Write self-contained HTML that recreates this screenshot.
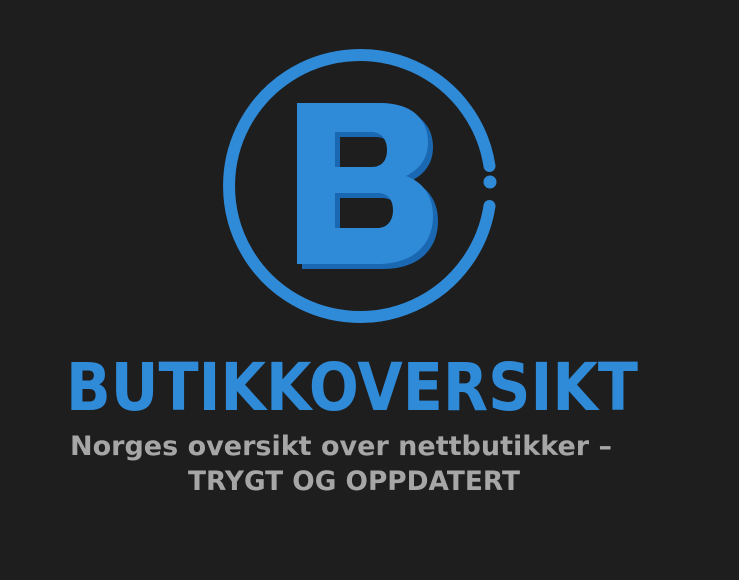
<!DOCTYPE html>
<html><head><meta charset="utf-8"><style>
html,body{margin:0;padding:0;background:#1e1e1e;}
svg{display:block}
</style></head><body>
<svg width="739" height="580" viewBox="0 0 739 580" xmlns="http://www.w3.org/2000/svg">
<rect width="739" height="580" fill="#1e1e1e"/>
<path d="M489.5 166 A131 131 0 1 0 489.5 206" fill="none" stroke="#2f8ad8" stroke-width="12" stroke-linecap="round"/>
<circle cx="490" cy="182" r="6.5" fill="#2f8ad8"/>
<g transform="translate(5,5)" fill="#1a68b2">
<path fill-rule="evenodd" d="M297 103 H380 C415 103 428 122 428 142 C428 160 418 170 406 176 C423 182 433 196 433 216 C433 244 414 264 378 264 H297 Z M335 132 V167 H372 C382 167 387 160 387 150 C387 139 381 132 371 132 Z M335 193 V228 H377 C388 228 393 220 393 210 C393 200 388 193 377 193 Z"/>
</g>
<path fill="#2f8ad8" fill-rule="evenodd" d="M297 103 H380 C415 103 428 122 428 142 C428 160 418 170 406 176 C423 182 433 196 433 216 C433 244 414 264 378 264 H297 Z M335 132 V167 H372 C382 167 387 160 387 150 C387 139 381 132 371 132 Z M335 193 V228 H377 C388 228 393 220 393 210 C393 200 388 193 377 193 Z"/>
<path fill="#1a68b2" d="M335 132 H371 C376 132 380 134 383 137 H340 V167 H335 Z M335 193 H377 C382 193 386 195 389 198 H340 V228 H335 Z"/>
<text x="66" y="410" textLength="572" lengthAdjust="spacingAndGlyphs" font-family="DejaVu Sans, sans-serif" font-weight="bold" font-size="66" fill="#2f8ad8">BUTIKKOVERSIKT</text>
<text x="70" y="455" textLength="542" lengthAdjust="spacingAndGlyphs" font-family="DejaVu Sans, sans-serif" font-weight="bold" font-size="27" fill="#a6a6a6">Norges oversikt over nettbutikker –</text>
<text x="188" y="490" textLength="332" lengthAdjust="spacingAndGlyphs" font-family="DejaVu Sans, sans-serif" font-weight="bold" font-size="27" fill="#a6a6a6">TRYGT OG OPPDATERT</text>
</svg>
</body></html>
